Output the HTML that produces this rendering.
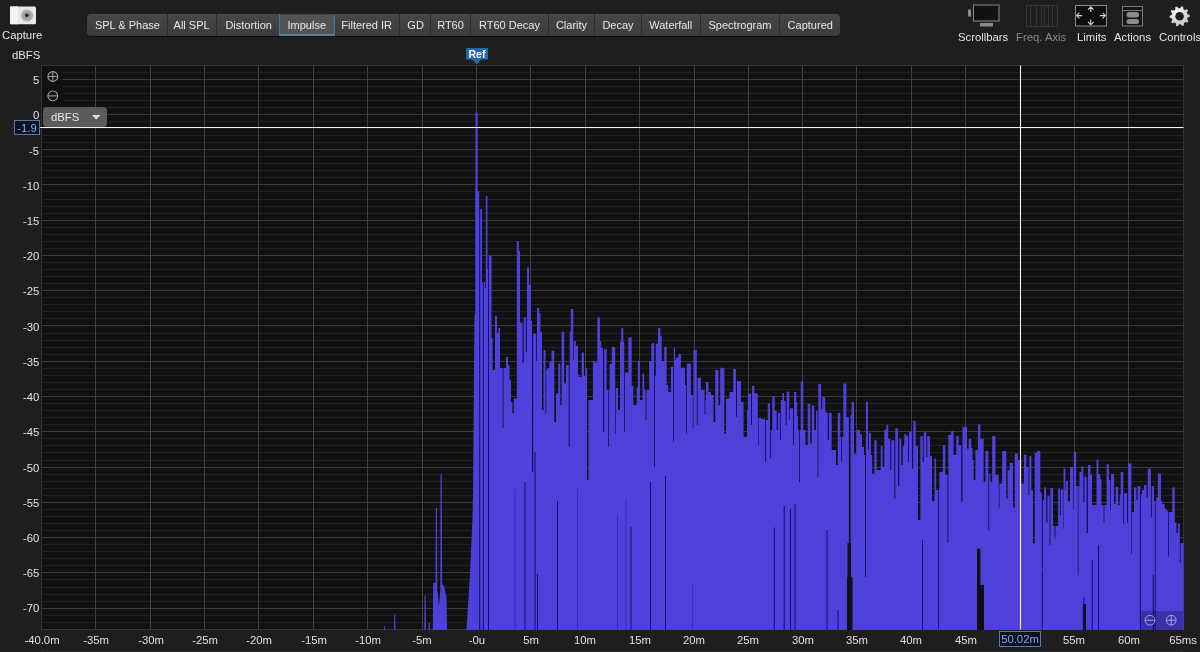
<!DOCTYPE html><html><head><meta charset="utf-8"><style>
*{margin:0;padding:0;box-sizing:border-box}
html,body{width:1200px;height:652px;overflow:hidden;background:#1e1e1e;font-family:"Liberation Sans", sans-serif;color:#e6e6e6}
.a{position:absolute;white-space:nowrap;will-change:transform}
.tabs{position:absolute;left:87px;top:14px;height:22px;width:753px;border-radius:4px;background:linear-gradient(#474747,#3b3b3b);box-shadow:0 1px 1px rgba(0,0,0,.5)}
.tab{position:absolute;top:0;height:22px;font-size:11px;line-height:22px;text-align:center;color:#e8e8e8;border-right:1px solid #2e2e2e;will-change:transform}
.lbl{font-size:11.3px;color:#e4e4e4}
.yl{position:absolute;right:1160.7px;font-size:11.3px;color:#e0e0e0;text-align:right;line-height:12px;will-change:transform}
.xl{position:absolute;top:634px;font-size:11.3px;color:#e0e0e0;line-height:12px;width:60px;text-align:center;will-change:transform}
</style></head><body>
<div class="tabs">
<div class="tab" style="left:0.5px;width:79.8px">SPL & Phase</div>
<div class="tab" style="left:80.3px;width:50.2px">All SPL</div>
<div class="tab" style="left:130.5px;width:62.3px">Distortion</div>
<div class="tab" style="left:192.3px;width:55.6px;background:#535353;border:1px solid #4d7590;border-top-color:#2c4a60;border-bottom:2px solid #5282a3;line-height:20px;top:0">Impulse</div>
<div class="tab" style="left:247.4px;width:66.4px">Filtered IR</div>
<div class="tab" style="left:313.8px;width:30.2px">GD</div>
<div class="tab" style="left:344.0px;width:40.0px">RT60</div>
<div class="tab" style="left:384.0px;width:78.0px">RT60 Decay</div>
<div class="tab" style="left:462.0px;width:46.0px">Clarity</div>
<div class="tab" style="left:508.0px;width:47.0px">Decay</div>
<div class="tab" style="left:555.0px;width:58.5px">Waterfall</div>
<div class="tab" style="left:613.5px;width:79.0px">Spectrogram</div>
<div class="tab" style="left:692.5px;width:60.5px;border-right:none">Captured</div>
</div>
<div class="a lbl" style="left:2px;top:29px">Capture</div>
<div class="a lbl" style="left:12px;top:49px">dBFS</div>
<div class="a lbl" style="left:957.6px;top:30.8px;color:#e4e4e4">Scrollbars</div>
<div class="a lbl" style="left:1016px;top:30.8px;color:#8a8a8a">Freq. Axis</div>
<div class="a lbl" style="left:1076.5px;top:30.8px;color:#e4e4e4">Limits</div>
<div class="a lbl" style="left:1113.5px;top:30.8px;color:#e4e4e4">Actions</div>
<div class="a lbl" style="left:1158.5px;top:30.8px;color:#e4e4e4">Controls</div>
<div class="yl" style="top:74.1px">5</div>
<div class="yl" style="top:109.3px">0</div>
<div class="yl" style="top:144.5px">-5</div>
<div class="yl" style="top:179.7px">-10</div>
<div class="yl" style="top:215.0px">-15</div>
<div class="yl" style="top:250.2px">-20</div>
<div class="yl" style="top:285.4px">-25</div>
<div class="yl" style="top:320.6px">-30</div>
<div class="yl" style="top:355.8px">-35</div>
<div class="yl" style="top:391.1px">-40</div>
<div class="yl" style="top:426.3px">-45</div>
<div class="yl" style="top:461.5px">-50</div>
<div class="yl" style="top:496.7px">-55</div>
<div class="yl" style="top:531.9px">-60</div>
<div class="yl" style="top:567.2px">-65</div>
<div class="yl" style="top:602.4px">-70</div>
<div class="xl" style="left:12.0px">-40.0m</div>
<div class="xl" style="left:66.3px">-35m</div>
<div class="xl" style="left:120.7px">-30m</div>
<div class="xl" style="left:175.0px">-25m</div>
<div class="xl" style="left:229.3px">-20m</div>
<div class="xl" style="left:283.7px">-15m</div>
<div class="xl" style="left:338.0px">-10m</div>
<div class="xl" style="left:392.3px">-5m</div>
<div class="xl" style="left:446.7px">-0u</div>
<div class="xl" style="left:501.0px">5m</div>
<div class="xl" style="left:555.3px">10m</div>
<div class="xl" style="left:609.7px">15m</div>
<div class="xl" style="left:664.0px">20m</div>
<div class="xl" style="left:718.3px">25m</div>
<div class="xl" style="left:772.7px">30m</div>
<div class="xl" style="left:827.0px">35m</div>
<div class="xl" style="left:881.3px">40m</div>
<div class="xl" style="left:935.7px">45m</div>
<div class="xl" style="left:1044.3px">55m</div>
<div class="xl" style="left:1098.7px">60m</div>
<div class="xl" style="left:1153.0px">65ms</div>
<svg class="a" style="left:0;top:0" width="1200" height="652" viewBox="0 0 1200 652">
<rect x="41.5" y="65.5" width="1142.0" height="564.0" fill="#111111" stroke="#353535" stroke-width="1"/>
<line x1="41.5" y1="72.5" x2="1183.5" y2="72.5" stroke="#222222"/>
<line x1="41.5" y1="79.5" x2="1183.5" y2="79.5" stroke="#3a3a3a"/>
<line x1="41.5" y1="86.5" x2="1183.5" y2="86.5" stroke="#222222"/>
<line x1="41.5" y1="93.5" x2="1183.5" y2="93.5" stroke="#222222"/>
<line x1="41.5" y1="100.5" x2="1183.5" y2="100.5" stroke="#222222"/>
<line x1="41.5" y1="107.5" x2="1183.5" y2="107.5" stroke="#222222"/>
<line x1="41.5" y1="114.5" x2="1183.5" y2="114.5" stroke="#3a3a3a"/>
<line x1="41.5" y1="121.5" x2="1183.5" y2="121.5" stroke="#222222"/>
<line x1="41.5" y1="128.5" x2="1183.5" y2="128.5" stroke="#222222"/>
<line x1="41.5" y1="135.5" x2="1183.5" y2="135.5" stroke="#222222"/>
<line x1="41.5" y1="142.5" x2="1183.5" y2="142.5" stroke="#222222"/>
<line x1="41.5" y1="149.5" x2="1183.5" y2="149.5" stroke="#3a3a3a"/>
<line x1="41.5" y1="156.5" x2="1183.5" y2="156.5" stroke="#222222"/>
<line x1="41.5" y1="163.5" x2="1183.5" y2="163.5" stroke="#222222"/>
<line x1="41.5" y1="170.5" x2="1183.5" y2="170.5" stroke="#222222"/>
<line x1="41.5" y1="177.5" x2="1183.5" y2="177.5" stroke="#222222"/>
<line x1="41.5" y1="184.5" x2="1183.5" y2="184.5" stroke="#3a3a3a"/>
<line x1="41.5" y1="191.5" x2="1183.5" y2="191.5" stroke="#222222"/>
<line x1="41.5" y1="199.5" x2="1183.5" y2="199.5" stroke="#222222"/>
<line x1="41.5" y1="206.5" x2="1183.5" y2="206.5" stroke="#222222"/>
<line x1="41.5" y1="213.5" x2="1183.5" y2="213.5" stroke="#222222"/>
<line x1="41.5" y1="220.5" x2="1183.5" y2="220.5" stroke="#3a3a3a"/>
<line x1="41.5" y1="227.5" x2="1183.5" y2="227.5" stroke="#222222"/>
<line x1="41.5" y1="234.5" x2="1183.5" y2="234.5" stroke="#222222"/>
<line x1="41.5" y1="241.5" x2="1183.5" y2="241.5" stroke="#222222"/>
<line x1="41.5" y1="248.5" x2="1183.5" y2="248.5" stroke="#222222"/>
<line x1="41.5" y1="255.5" x2="1183.5" y2="255.5" stroke="#3a3a3a"/>
<line x1="41.5" y1="262.5" x2="1183.5" y2="262.5" stroke="#222222"/>
<line x1="41.5" y1="269.5" x2="1183.5" y2="269.5" stroke="#222222"/>
<line x1="41.5" y1="276.5" x2="1183.5" y2="276.5" stroke="#222222"/>
<line x1="41.5" y1="283.5" x2="1183.5" y2="283.5" stroke="#222222"/>
<line x1="41.5" y1="290.5" x2="1183.5" y2="290.5" stroke="#3a3a3a"/>
<line x1="41.5" y1="297.5" x2="1183.5" y2="297.5" stroke="#222222"/>
<line x1="41.5" y1="304.5" x2="1183.5" y2="304.5" stroke="#222222"/>
<line x1="41.5" y1="311.5" x2="1183.5" y2="311.5" stroke="#222222"/>
<line x1="41.5" y1="318.5" x2="1183.5" y2="318.5" stroke="#222222"/>
<line x1="41.5" y1="325.5" x2="1183.5" y2="325.5" stroke="#3a3a3a"/>
<line x1="41.5" y1="333.5" x2="1183.5" y2="333.5" stroke="#222222"/>
<line x1="41.5" y1="340.5" x2="1183.5" y2="340.5" stroke="#222222"/>
<line x1="41.5" y1="347.5" x2="1183.5" y2="347.5" stroke="#222222"/>
<line x1="41.5" y1="354.5" x2="1183.5" y2="354.5" stroke="#222222"/>
<line x1="41.5" y1="361.5" x2="1183.5" y2="361.5" stroke="#3a3a3a"/>
<line x1="41.5" y1="368.5" x2="1183.5" y2="368.5" stroke="#222222"/>
<line x1="41.5" y1="375.5" x2="1183.5" y2="375.5" stroke="#222222"/>
<line x1="41.5" y1="382.5" x2="1183.5" y2="382.5" stroke="#222222"/>
<line x1="41.5" y1="389.5" x2="1183.5" y2="389.5" stroke="#222222"/>
<line x1="41.5" y1="396.5" x2="1183.5" y2="396.5" stroke="#3a3a3a"/>
<line x1="41.5" y1="403.5" x2="1183.5" y2="403.5" stroke="#222222"/>
<line x1="41.5" y1="410.5" x2="1183.5" y2="410.5" stroke="#222222"/>
<line x1="41.5" y1="417.5" x2="1183.5" y2="417.5" stroke="#222222"/>
<line x1="41.5" y1="424.5" x2="1183.5" y2="424.5" stroke="#222222"/>
<line x1="41.5" y1="431.5" x2="1183.5" y2="431.5" stroke="#3a3a3a"/>
<line x1="41.5" y1="438.5" x2="1183.5" y2="438.5" stroke="#222222"/>
<line x1="41.5" y1="445.5" x2="1183.5" y2="445.5" stroke="#222222"/>
<line x1="41.5" y1="452.5" x2="1183.5" y2="452.5" stroke="#222222"/>
<line x1="41.5" y1="460.5" x2="1183.5" y2="460.5" stroke="#222222"/>
<line x1="41.5" y1="467.5" x2="1183.5" y2="467.5" stroke="#3a3a3a"/>
<line x1="41.5" y1="474.5" x2="1183.5" y2="474.5" stroke="#222222"/>
<line x1="41.5" y1="481.5" x2="1183.5" y2="481.5" stroke="#222222"/>
<line x1="41.5" y1="488.5" x2="1183.5" y2="488.5" stroke="#222222"/>
<line x1="41.5" y1="495.5" x2="1183.5" y2="495.5" stroke="#222222"/>
<line x1="41.5" y1="502.5" x2="1183.5" y2="502.5" stroke="#3a3a3a"/>
<line x1="41.5" y1="509.5" x2="1183.5" y2="509.5" stroke="#222222"/>
<line x1="41.5" y1="516.5" x2="1183.5" y2="516.5" stroke="#222222"/>
<line x1="41.5" y1="523.5" x2="1183.5" y2="523.5" stroke="#222222"/>
<line x1="41.5" y1="530.5" x2="1183.5" y2="530.5" stroke="#222222"/>
<line x1="41.5" y1="537.5" x2="1183.5" y2="537.5" stroke="#3a3a3a"/>
<line x1="41.5" y1="544.5" x2="1183.5" y2="544.5" stroke="#222222"/>
<line x1="41.5" y1="551.5" x2="1183.5" y2="551.5" stroke="#222222"/>
<line x1="41.5" y1="558.5" x2="1183.5" y2="558.5" stroke="#222222"/>
<line x1="41.5" y1="565.5" x2="1183.5" y2="565.5" stroke="#222222"/>
<line x1="41.5" y1="572.5" x2="1183.5" y2="572.5" stroke="#3a3a3a"/>
<line x1="41.5" y1="579.5" x2="1183.5" y2="579.5" stroke="#222222"/>
<line x1="41.5" y1="587.5" x2="1183.5" y2="587.5" stroke="#222222"/>
<line x1="41.5" y1="594.5" x2="1183.5" y2="594.5" stroke="#222222"/>
<line x1="41.5" y1="601.5" x2="1183.5" y2="601.5" stroke="#222222"/>
<line x1="41.5" y1="608.5" x2="1183.5" y2="608.5" stroke="#3a3a3a"/>
<line x1="41.5" y1="615.5" x2="1183.5" y2="615.5" stroke="#222222"/>
<line x1="41.5" y1="622.5" x2="1183.5" y2="622.5" stroke="#222222"/>
<line x1="95.5" y1="65.5" x2="95.5" y2="629.5" stroke="#424242"/>
<line x1="150.5" y1="65.5" x2="150.5" y2="629.5" stroke="#424242"/>
<line x1="204.5" y1="65.5" x2="204.5" y2="629.5" stroke="#424242"/>
<line x1="258.5" y1="65.5" x2="258.5" y2="629.5" stroke="#424242"/>
<line x1="313.5" y1="65.5" x2="313.5" y2="629.5" stroke="#424242"/>
<line x1="367.5" y1="65.5" x2="367.5" y2="629.5" stroke="#424242"/>
<line x1="422.5" y1="65.5" x2="422.5" y2="629.5" stroke="#424242"/>
<line x1="476.5" y1="65.5" x2="476.5" y2="629.5" stroke="#424242"/>
<line x1="530.5" y1="65.5" x2="530.5" y2="629.5" stroke="#424242"/>
<line x1="585.5" y1="65.5" x2="585.5" y2="629.5" stroke="#424242"/>
<line x1="639.5" y1="65.5" x2="639.5" y2="629.5" stroke="#424242"/>
<line x1="694.5" y1="65.5" x2="694.5" y2="629.5" stroke="#424242"/>
<line x1="748.5" y1="65.5" x2="748.5" y2="629.5" stroke="#424242"/>
<line x1="802.5" y1="65.5" x2="802.5" y2="629.5" stroke="#424242"/>
<line x1="856.5" y1="65.5" x2="856.5" y2="629.5" stroke="#424242"/>
<line x1="911.5" y1="65.5" x2="911.5" y2="629.5" stroke="#424242"/>
<line x1="965.5" y1="65.5" x2="965.5" y2="629.5" stroke="#424242"/>
<line x1="1020.5" y1="65.5" x2="1020.5" y2="629.5" stroke="#424242"/>
<line x1="1074.5" y1="65.5" x2="1074.5" y2="629.5" stroke="#424242"/>
<line x1="1128.5" y1="65.5" x2="1128.5" y2="629.5" stroke="#424242"/>
<rect x="479.20" y="209.00" width="1.00" height="13.00" fill="#140c70"/>
<rect x="485.00" y="282.00" width="0.80" height="6.00" fill="#140c70"/>
<rect x="487.50" y="256.00" width="1.00" height="13.00" fill="#140c70"/>
<rect x="502.60" y="368.00" width="0.80" height="60.00" fill="#140c70"/>
<rect x="522.50" y="322.50" width="1.20" height="40.50" fill="#140c70"/>
<rect x="525.80" y="317.00" width="1.20" height="35.00" fill="#140c70"/>
<rect x="532.00" y="333.75" width="1.20" height="138.25" fill="#140c70"/>
<rect x="536.20" y="333.75" width="0.80" height="27.25" fill="#140c70"/>
<rect x="545.50" y="370.00" width="0.70" height="43.60" fill="#140c70"/>
<rect x="568.70" y="365.00" width="1.00" height="82.00" fill="#140c70"/>
<rect x="573.30" y="341.00" width="0.60" height="19.00" fill="#140c70"/>
<rect x="603.00" y="349.00" width="1.20" height="83.00" fill="#140c70"/>
<rect x="608.20" y="390.00" width="0.80" height="57.00" fill="#140c70"/>
<rect x="615.20" y="388.00" width="0.70" height="45.60" fill="#140c70"/>
<rect x="624.20" y="372.50" width="0.80" height="59.50" fill="#140c70"/>
<rect x="645.60" y="390.00" width="0.90" height="30.00" fill="#140c70"/>
<rect x="654.20" y="376.00" width="0.80" height="91.00" fill="#140c70"/>
<rect x="673.00" y="366.80" width="0.80" height="75.00" fill="#140c70"/>
<rect x="675.00" y="357.60" width="0.90" height="2.40" fill="#140c70"/>
<rect x="686.00" y="385.00" width="0.80" height="48.40" fill="#140c70"/>
<rect x="692.80" y="395.00" width="0.60" height="33.00" fill="#140c70"/>
<rect x="696.80" y="377.70" width="0.80" height="47.30" fill="#140c70"/>
<rect x="704.60" y="400.00" width="0.80" height="15.00" fill="#140c70"/>
<rect x="736.00" y="381.00" width="1.00" height="35.70" fill="#140c70"/>
<rect x="751.10" y="393.60" width="0.90" height="31.40" fill="#140c70"/>
<rect x="758.40" y="418.00" width="0.60" height="27.00" fill="#140c70"/>
<rect x="765.00" y="420.00" width="0.80" height="42.00" fill="#140c70"/>
<rect x="770.00" y="430.00" width="0.80" height="28.50" fill="#140c70"/>
<rect x="776.70" y="412.80" width="1.30" height="17.20" fill="#140c70"/>
<rect x="780.00" y="412.80" width="0.80" height="27.20" fill="#140c70"/>
<rect x="785.70" y="400.70" width="1.00" height="24.30" fill="#140c70"/>
<rect x="789.30" y="408.30" width="0.70" height="11.70" fill="#140c70"/>
<rect x="793.00" y="408.30" width="1.00" height="36.70" fill="#140c70"/>
<rect x="799.20" y="430.00" width="0.80" height="52.00" fill="#140c70"/>
<rect x="817.60" y="410.70" width="0.70" height="66.30" fill="#140c70"/>
<rect x="821.00" y="397.00" width="1.30" height="12.30" fill="#140c70"/>
<rect x="827.70" y="412.70" width="1.30" height="27.30" fill="#140c70"/>
<rect x="841.00" y="437.00" width="0.80" height="25.00" fill="#140c70"/>
<rect x="865.00" y="455.00" width="0.90" height="122.00" fill="#140c70"/>
<rect x="868.00" y="432.70" width="1.00" height="17.30" fill="#140c70"/>
<rect x="890.30" y="440.30" width="1.00" height="29.70" fill="#140c70"/>
<rect x="894.30" y="440.30" width="1.00" height="58.10" fill="#140c70"/>
<rect x="898.00" y="438.70" width="1.30" height="47.30" fill="#140c70"/>
<rect x="908.00" y="436.00" width="1.00" height="26.00" fill="#140c70"/>
<rect x="912.00" y="431.70" width="1.30" height="36.90" fill="#140c70"/>
<rect x="922.70" y="436.00" width="1.00" height="26.00" fill="#140c70"/>
<rect x="926.30" y="436.30" width="1.00" height="20.70" fill="#140c70"/>
<rect x="938.00" y="490.00" width="0.80" height="139.00" fill="#140c70"/>
<rect x="947.50" y="475.00" width="0.80" height="67.70" fill="#140c70"/>
<rect x="961.20" y="445.00" width="1.30" height="56.80" fill="#140c70"/>
<rect x="988.40" y="473.60" width="0.80" height="56.60" fill="#140c70"/>
<rect x="998.80" y="483.60" width="0.70" height="24.90" fill="#140c70"/>
<rect x="1028.50" y="467.00" width="0.80" height="28.00" fill="#140c70"/>
<rect x="1041.80" y="500.00" width="1.00" height="69.00" fill="#140c70"/>
<rect x="1046.20" y="495.70" width="1.20" height="27.00" fill="#140c70"/>
<rect x="1049.60" y="495.70" width="0.80" height="49.30" fill="#140c70"/>
<rect x="1054.60" y="526.00" width="0.80" height="13.00" fill="#140c70"/>
<rect x="1060.00" y="489.40" width="0.80" height="25.60" fill="#140c70"/>
<rect x="1063.20" y="489.40" width="0.40" height="39.60" fill="#140c70"/>
<rect x="1065.40" y="480.80" width="0.60" height="9.20" fill="#140c70"/>
<rect x="1073.20" y="467.00" width="0.60" height="43.00" fill="#140c70"/>
<rect x="1077.80" y="486.00" width="0.60" height="89.00" fill="#140c70"/>
<rect x="1083.30" y="476.40" width="1.10" height="26.10" fill="#140c70"/>
<rect x="1086.70" y="476.40" width="1.30" height="56.60" fill="#140c70"/>
<rect x="1103.60" y="505.00" width="0.80" height="17.70" fill="#140c70"/>
<rect x="1110.30" y="480.00" width="0.70" height="30.00" fill="#140c70"/>
<rect x="1123.20" y="493.20" width="0.80" height="30.80" fill="#140c70"/>
<rect x="1127.00" y="493.20" width="1.00" height="29.50" fill="#140c70"/>
<rect x="1131.40" y="512.00" width="0.60" height="42.00" fill="#140c70"/>
<rect x="1136.40" y="487.50" width="1.30" height="12.50" fill="#140c70"/>
<rect x="1146.50" y="485.00" width="1.20" height="12.60" fill="#140c70"/>
<rect x="1150.90" y="486.00" width="0.90" height="31.60" fill="#140c70"/>
<rect x="1154.80" y="501.00" width="0.80" height="129.00" fill="#140c70"/>
<rect x="1168.00" y="512.00" width="0.80" height="44.60" fill="#140c70"/>
<rect x="1179.80" y="543.00" width="0.80" height="20.00" fill="#140c70"/>
<path d="M383.50,630.00 L384.50,625.00 L385.50,630.00 L394.00,630.00 L394.20,614.30 L395.20,614.30 L395.50,630.00 L424.30,630.00 L424.50,595.50 L425.70,595.50 L426.00,630.00 L428.50,630.00 L428.60,623.00 L429.80,623.00 L430.00,630.00 L432.80,630.00 L433.20,583.00 L435.50,583.00 L435.80,508.00 L437.00,508.00 L437.30,590.00 L439.00,606.00 L440.30,590.00 L440.50,474.50 L441.80,474.50 L442.20,584.00 L444.00,586.00 L446.50,597.00 L447.00,630.00 L466.50,630.00 L469.00,590.00 L470.00,573.00 L472.50,519.00 L473.20,481.00 L474.00,365.00 L474.60,314.00 L475.20,314.00 L475.20,191.00 L475.40,191.00 L475.40,112.50 L477.70,112.50 L477.70,191.00 L479.20,191.00 L479.20,222.00 L480.20,222.00 L480.20,209.00 L482.00,209.00 L482.00,282.00 L485.00,282.00 L485.00,288.00 L485.80,288.00 L485.80,196.00 L487.50,196.00 L487.50,269.00 L488.50,269.00 L488.50,256.00 L491.50,256.00 L491.50,338.00 L492.60,338.00 L492.60,370.00 L495.00,370.00 L495.00,315.80 L497.00,315.80 L497.00,333.00 L498.30,333.00 L498.30,328.00 L500.00,328.00 L500.00,368.00 L502.60,368.00 L502.60,428.00 L503.40,428.00 L503.40,368.00 L506.00,368.00 L506.00,356.70 L508.00,356.70 L508.00,365.00 L509.50,365.00 L509.50,380.00 L511.00,380.00 L511.00,402.00 L512.40,402.00 L512.40,413.00 L513.80,413.00 L513.80,398.50 L516.80,398.50 L516.80,241.00 L518.80,241.00 L518.80,251.00 L520.00,251.00 L520.00,322.50 L522.50,322.50 L522.50,363.00 L523.70,363.00 L523.70,317.00 L525.80,317.00 L525.80,352.00 L527.00,352.00 L527.00,267.50 L529.00,267.50 L529.00,285.00 L530.80,285.00 L530.80,321.00 L532.00,321.00 L532.00,472.00 L533.20,472.00 L533.20,333.75 L536.20,333.75 L536.20,361.00 L537.00,361.00 L537.00,308.00 L539.20,308.00 L539.20,313.00 L540.40,313.00 L540.40,331.70 L542.00,331.70 L542.00,410.00 L543.50,410.00 L543.50,350.00 L545.50,350.00 L545.50,413.60 L546.20,413.60 L546.20,370.00 L547.30,370.00 L547.30,368.00 L549.30,368.00 L549.30,362.00 L551.50,362.00 L551.50,350.70 L554.30,350.70 L554.30,422.00 L556.00,422.00 L556.00,393.50 L558.20,393.50 L558.20,363.40 L560.30,363.40 L560.30,405.00 L561.60,405.00 L561.60,331.70 L564.20,331.70 L564.20,383.50 L566.00,383.50 L566.00,365.00 L568.70,365.00 L568.70,447.00 L569.70,447.00 L569.70,331.70 L570.80,331.70 L570.80,309.00 L573.30,309.00 L573.30,360.00 L573.90,360.00 L573.90,341.00 L575.80,341.00 L575.80,346.00 L578.00,346.00 L578.00,375.00 L579.20,375.00 L579.20,376.70 L581.70,376.70 L581.70,352.50 L584.00,352.50 L584.00,376.00 L585.40,376.00 L585.40,368.30 L587.10,368.30 L587.10,480.00 L588.50,480.00 L588.50,400.00 L592.90,400.00 L592.90,360.80 L595.00,360.80 L595.00,362.50 L597.30,362.50 L597.30,317.50 L600.00,317.50 L600.00,341.00 L601.30,341.00 L601.30,348.00 L603.00,348.00 L603.00,432.00 L604.20,432.00 L604.20,349.00 L606.70,349.00 L606.70,390.00 L608.20,390.00 L608.20,447.00 L609.00,447.00 L609.00,390.00 L609.60,390.00 L609.60,364.00 L611.70,364.00 L611.70,347.00 L615.20,347.00 L615.20,433.60 L615.90,433.60 L615.90,388.00 L618.00,388.00 L618.00,410.00 L620.00,410.00 L620.00,341.70 L621.20,341.70 L621.20,328.00 L623.30,328.00 L623.30,341.70 L624.20,341.70 L624.20,432.00 L625.00,432.00 L625.00,372.50 L628.30,372.50 L628.30,337.50 L631.70,337.50 L631.70,386.00 L633.30,386.00 L633.30,405.00 L636.70,405.00 L636.70,387.00 L637.90,387.00 L637.90,360.80 L640.00,360.80 L640.00,400.00 L642.50,400.00 L642.50,373.30 L644.20,373.30 L644.20,390.00 L645.60,390.00 L645.60,420.00 L646.50,420.00 L646.50,390.00 L649.20,390.00 L649.20,361.00 L651.30,361.00 L651.30,344.00 L652.00,344.00 L652.00,343.30 L654.20,343.30 L654.20,467.00 L655.00,467.00 L655.00,376.00 L655.80,376.00 L655.80,343.75 L658.00,343.75 L658.00,328.00 L660.40,328.00 L660.40,335.80 L661.70,335.80 L661.70,361.00 L664.20,361.00 L664.20,346.70 L665.00,346.70 L665.00,346.70 L666.70,346.70 L666.70,385.00 L668.30,385.00 L668.30,392.00 L670.90,392.00 L670.90,366.80 L673.00,366.80 L673.00,441.80 L673.80,441.80 L673.80,347.60 L675.00,347.60 L675.00,360.00 L675.90,360.00 L675.90,357.60 L678.40,357.60 L678.40,354.00 L680.90,354.00 L680.90,367.70 L685.00,367.70 L685.00,385.00 L686.00,385.00 L686.00,433.40 L686.80,433.40 L686.80,363.50 L690.90,363.50 L690.90,395.00 L692.80,395.00 L692.80,428.00 L693.40,428.00 L693.40,350.00 L696.80,350.00 L696.80,425.00 L697.60,425.00 L697.60,377.70 L701.00,377.70 L701.00,390.00 L704.60,390.00 L704.60,415.00 L705.40,415.00 L705.40,400.00 L706.00,400.00 L706.00,382.00 L708.50,382.00 L708.50,392.00 L711.00,392.00 L711.00,395.00 L713.50,395.00 L713.50,422.00 L715.20,422.00 L715.20,370.00 L718.50,370.00 L718.50,405.00 L720.20,405.00 L720.20,367.70 L724.40,367.70 L724.40,433.40 L726.00,433.40 L726.00,398.60 L729.40,398.60 L729.40,392.00 L733.20,392.00 L733.20,369.00 L736.00,369.00 L736.00,416.70 L737.00,416.70 L737.00,381.00 L741.00,381.00 L741.00,402.00 L743.60,402.00 L743.60,436.80 L747.00,436.80 L747.00,410.00 L747.80,410.00 L747.80,393.60 L751.10,393.60 L751.10,425.00 L752.00,425.00 L752.00,386.00 L754.50,386.00 L754.50,393.60 L757.80,393.60 L757.80,418.00 L758.40,418.00 L758.40,445.00 L759.00,445.00 L759.00,418.00 L761.20,418.00 L761.20,418.70 L765.00,418.70 L765.00,462.00 L765.80,462.00 L765.80,420.00 L767.80,420.00 L767.80,403.60 L770.00,403.60 L770.00,458.50 L770.80,458.50 L770.80,430.00 L772.30,430.00 L772.30,396.00 L774.70,396.00 L774.70,410.70 L776.70,410.70 L776.70,430.00 L778.00,430.00 L778.00,412.80 L780.00,412.80 L780.00,440.00 L780.80,440.00 L780.80,400.00 L782.30,400.00 L782.30,393.00 L784.00,393.00 L784.00,400.70 L785.70,400.70 L785.70,425.00 L786.70,425.00 L786.70,391.70 L789.30,391.70 L789.30,420.00 L790.00,420.00 L790.00,408.30 L793.00,408.30 L793.00,445.00 L794.00,445.00 L794.00,392.00 L796.30,392.00 L796.30,402.00 L797.20,402.00 L797.20,416.00 L798.00,416.00 L798.00,430.00 L799.20,430.00 L799.20,482.00 L800.00,482.00 L800.00,430.00 L800.70,430.00 L800.70,381.30 L803.30,381.30 L803.30,430.00 L805.50,430.00 L805.50,445.00 L807.70,445.00 L807.70,403.70 L810.30,403.70 L810.30,443.50 L811.70,443.50 L811.70,405.30 L814.30,405.30 L814.30,430.00 L816.00,430.00 L816.00,410.70 L817.60,410.70 L817.60,477.00 L818.30,477.00 L818.30,384.00 L821.00,384.00 L821.00,409.30 L822.30,409.30 L822.30,397.00 L825.30,397.00 L825.30,412.30 L827.70,412.30 L827.70,440.00 L829.00,440.00 L829.00,412.70 L831.70,412.70 L831.70,450.00 L836.00,450.00 L836.00,465.00 L837.70,465.00 L837.70,412.70 L840.30,412.70 L840.30,437.00 L841.00,437.00 L841.00,462.00 L841.80,462.00 L841.80,437.00 L843.30,437.00 L843.30,383.50 L846.40,383.50 L846.40,417.00 L848.90,417.00 L848.90,467.00 L850.60,467.00 L850.60,415.00 L851.50,415.00 L851.50,402.00 L854.00,402.00 L854.00,453.50 L856.50,453.50 L856.50,430.00 L860.00,430.00 L860.00,434.30 L862.00,434.30 L862.00,447.00 L864.00,447.00 L864.00,455.00 L865.00,455.00 L865.00,577.00 L865.90,577.00 L865.90,401.70 L868.00,401.70 L868.00,450.00 L869.00,450.00 L869.00,432.70 L871.00,432.70 L871.00,455.00 L872.20,455.00 L872.20,474.00 L874.30,474.00 L874.30,440.30 L876.70,440.30 L876.70,470.00 L880.70,470.00 L880.70,446.00 L882.70,446.00 L882.70,467.00 L884.30,467.00 L884.30,429.70 L886.30,429.70 L886.30,425.00 L888.30,425.00 L888.30,439.00 L890.30,439.00 L890.30,470.00 L891.30,470.00 L891.30,440.30 L894.30,440.30 L894.30,498.40 L895.30,498.40 L895.30,428.30 L898.00,428.30 L898.00,486.00 L899.30,486.00 L899.30,438.70 L901.30,438.70 L901.30,465.00 L902.70,465.00 L902.70,446.30 L904.30,446.30 L904.30,434.00 L906.30,434.00 L906.30,436.00 L908.00,436.00 L908.00,462.00 L909.00,462.00 L909.00,431.70 L912.00,431.70 L912.00,468.60 L913.30,468.60 L913.30,420.70 L915.70,420.70 L915.70,445.70 L918.00,445.70 L918.00,520.00 L920.30,520.00 L920.30,436.00 L922.70,436.00 L922.70,462.00 L923.70,462.00 L923.70,432.30 L926.30,432.30 L926.30,457.00 L927.30,457.00 L927.30,436.30 L930.00,436.30 L930.00,456.00 L932.00,456.00 L932.00,501.00 L934.40,501.00 L934.40,458.60 L936.10,458.60 L936.10,490.00 L938.00,490.00 L938.00,629.00 L938.80,629.00 L938.80,490.00 L939.40,490.00 L939.40,472.00 L942.80,472.00 L942.80,445.00 L945.30,445.00 L945.30,475.00 L947.50,475.00 L947.50,542.70 L948.30,542.70 L948.30,435.00 L951.10,435.00 L951.10,431.00 L953.60,431.00 L953.60,455.00 L956.20,455.00 L956.20,436.00 L958.70,436.00 L958.70,445.00 L961.20,445.00 L961.20,501.80 L962.50,501.80 L962.50,426.80 L967.00,426.80 L967.00,448.50 L968.70,448.50 L968.70,439.00 L971.20,439.00 L971.20,448.00 L972.50,448.00 L972.50,460.00 L973.70,460.00 L973.70,480.00 L975.40,480.00 L975.40,450.00 L977.90,450.00 L977.90,424.30 L980.40,424.30 L980.40,438.50 L983.70,438.50 L983.70,482.00 L985.40,482.00 L985.40,451.00 L988.40,451.00 L988.40,530.20 L989.20,530.20 L989.20,473.60 L990.50,473.60 L990.50,482.00 L992.10,482.00 L992.10,436.00 L995.50,436.00 L995.50,475.00 L998.80,475.00 L998.80,508.50 L999.50,508.50 L999.50,483.60 L1002.10,483.60 L1002.10,451.00 L1006.30,451.00 L1006.30,498.40 L1007.60,498.40 L1007.60,470.00 L1009.70,470.00 L1009.70,462.70 L1013.00,462.70 L1013.00,507.60 L1014.70,507.60 L1014.70,453.50 L1018.00,453.50 L1018.00,460.00 L1021.40,460.00 L1021.40,483.60 L1023.90,483.60 L1023.90,454.40 L1026.40,454.40 L1026.40,467.00 L1028.50,467.00 L1028.50,495.00 L1029.30,495.00 L1029.30,456.00 L1031.40,456.00 L1031.40,490.00 L1033.00,490.00 L1033.00,543.60 L1034.70,543.60 L1034.70,452.70 L1037.30,452.70 L1037.30,451.00 L1040.30,451.00 L1040.30,492.60 L1041.80,492.60 L1041.80,569.00 L1042.80,569.00 L1042.80,500.00 L1044.00,500.00 L1044.00,487.50 L1046.20,487.50 L1046.20,522.70 L1047.40,522.70 L1047.40,495.70 L1049.60,495.70 L1049.60,545.00 L1050.40,545.00 L1050.40,488.00 L1053.00,488.00 L1053.00,526.00 L1054.60,526.00 L1054.60,539.00 L1055.40,539.00 L1055.40,526.00 L1058.10,526.00 L1058.10,488.80 L1060.00,488.80 L1060.00,515.00 L1060.80,515.00 L1060.80,489.40 L1063.20,489.40 L1063.20,529.00 L1063.60,529.00 L1063.60,468.60 L1065.40,468.60 L1065.40,490.00 L1066.00,490.00 L1066.00,480.80 L1067.90,480.80 L1067.90,501.00 L1070.00,501.00 L1070.00,467.00 L1073.20,467.00 L1073.20,510.00 L1073.80,510.00 L1073.80,452.00 L1076.20,452.00 L1076.20,486.00 L1077.80,486.00 L1077.80,575.00 L1078.40,575.00 L1078.40,486.00 L1079.50,486.00 L1079.50,472.00 L1081.40,472.00 L1081.40,466.40 L1083.30,466.40 L1083.30,502.50 L1084.40,502.50 L1084.40,476.40 L1086.70,476.40 L1086.70,533.00 L1088.00,533.00 L1088.00,465.00 L1090.50,465.00 L1090.50,474.60 L1092.00,474.60 L1092.00,505.00 L1096.50,505.00 L1096.50,459.50 L1098.40,459.50 L1098.40,474.00 L1100.30,474.00 L1100.30,479.00 L1101.50,479.00 L1101.50,505.00 L1103.60,505.00 L1103.60,522.70 L1104.40,522.70 L1104.40,505.00 L1106.60,505.00 L1106.60,464.20 L1109.00,464.20 L1109.00,480.00 L1110.30,480.00 L1110.30,510.00 L1111.00,510.00 L1111.00,474.00 L1114.10,474.00 L1114.10,504.00 L1115.70,504.00 L1115.70,487.00 L1118.20,487.00 L1118.20,505.00 L1119.70,505.00 L1119.70,494.50 L1120.70,494.50 L1120.70,472.00 L1123.20,472.00 L1123.20,524.00 L1124.00,524.00 L1124.00,493.20 L1127.00,493.20 L1127.00,522.70 L1128.00,522.70 L1128.00,463.50 L1131.40,463.50 L1131.40,554.00 L1132.00,554.00 L1132.00,512.00 L1134.00,512.00 L1134.00,487.50 L1136.40,487.50 L1136.40,500.00 L1137.70,500.00 L1137.70,486.00 L1140.20,486.00 L1140.20,494.50 L1142.00,494.50 L1142.00,490.00 L1144.00,490.00 L1144.00,485.00 L1146.50,485.00 L1146.50,497.60 L1147.70,497.60 L1147.70,468.60 L1150.90,468.60 L1150.90,517.60 L1151.80,517.60 L1151.80,486.00 L1154.00,486.00 L1154.00,501.00 L1154.80,501.00 L1154.80,630.00 L1155.60,630.00 L1155.60,501.00 L1156.20,501.00 L1156.20,497.60 L1157.80,497.60 L1157.80,473.60 L1161.00,473.60 L1161.00,500.80 L1162.20,500.80 L1162.20,504.00 L1164.70,504.00 L1164.70,509.00 L1167.00,509.00 L1167.00,511.00 L1168.00,511.00 L1168.00,556.60 L1168.80,556.60 L1168.80,512.00 L1172.30,512.00 L1172.30,487.50 L1174.80,487.50 L1174.80,522.70 L1176.40,522.70 L1176.40,532.70 L1177.80,532.70 L1177.80,524.00 L1179.80,524.00 L1179.80,563.00 L1180.60,563.00 L1180.60,543.00 L1183.70,543.00 L1183.70,630.00 Z" fill="#4e40d8"/>
<rect x="479.20" y="222.00" width="1" height="408.00" fill="#140c70"/>
<rect x="482.80" y="282.00" width="1" height="348.00" fill="#140c70"/>
<rect x="488.00" y="256.00" width="1" height="374.00" fill="#140c70"/>
<rect x="514.50" y="489.00" width="1" height="141.00" fill="#3a2eb4"/>
<rect x="577.00" y="489.00" width="1" height="141.00" fill="#3a2eb4"/>
<rect x="617.00" y="514.00" width="1" height="116.00" fill="#3a2eb4"/>
<rect x="625.50" y="499.00" width="1" height="131.00" fill="#3a2eb4"/>
<rect x="692.00" y="584.00" width="1" height="46.00" fill="#3a2eb4"/>
<rect x="524.50" y="482.00" width="1" height="148.00" fill="#140c70"/>
<rect x="534.50" y="452.00" width="1" height="178.00" fill="#140c70"/>
<rect x="537.00" y="574.00" width="1" height="56.00" fill="#140c70"/>
<rect x="557.00" y="501.00" width="1" height="129.00" fill="#140c70"/>
<rect x="630.50" y="527.00" width="1" height="103.00" fill="#140c70"/>
<rect x="650.00" y="482.00" width="1" height="148.00" fill="#140c70"/>
<rect x="665.00" y="476.00" width="1" height="154.00" fill="#140c70"/>
<rect x="773.75" y="527.50" width="1" height="102.50" fill="#140c70"/>
<rect x="783.75" y="506.00" width="1" height="124.00" fill="#140c70"/>
<rect x="790.00" y="509.00" width="1" height="121.00" fill="#140c70"/>
<rect x="794.50" y="504.00" width="1" height="126.00" fill="#140c70"/>
<rect x="826.50" y="530.00" width="1" height="100.00" fill="#140c70"/>
<rect x="837.50" y="610.00" width="1" height="20.00" fill="#140c70"/>
<rect x="922.00" y="540.00" width="1" height="90.00" fill="#140c70"/>
<rect x="848.90" y="467.00" width="1.70" height="163.00" fill="#111111"/>
<rect x="847.50" y="543.00" width="3.50" height="87.00" fill="#111111"/>
<rect x="847.00" y="577.00" width="5.50" height="53.00" fill="#111111"/>
<rect x="977.00" y="548.60" width="3.40" height="81.40" fill="#111111"/>
<rect x="979.50" y="585.00" width="4.50" height="45.00" fill="#111111"/>
<rect x="1082.80" y="604.00" width="3.20" height="26.00" fill="#111111"/>
<rect x="1083.30" y="597.50" width="1" height="32.50" fill="#140c70"/>
<rect x="1091.70" y="560.00" width="1" height="70.00" fill="#140c70"/>
<rect x="1098.00" y="545.00" width="1" height="85.00" fill="#140c70"/>
<rect x="1139.90" y="494.50" width="1" height="135.50" fill="#140c70"/>
<rect x="1152.80" y="575.00" width="1" height="55.00" fill="#140c70"/>
<rect x="1041.80" y="570.00" width="1" height="60.00" fill="#140c70"/>
<line x1="40" y1="127.5" x2="1183.5" y2="127.5" stroke="#f4f4f4" stroke-width="1.1"/>
<line x1="1020.5" y1="65.5" x2="1020.5" y2="629.5" stroke="#f4f4f4" stroke-width="1.1"/>
<rect x="42" y="66" width="20.5" height="38" fill="#111111"/>
<g stroke="#9c9c9c" fill="none" stroke-width="1.1"><circle cx="52.8" cy="76.5" r="4.9"/><line x1="47.9" y1="76.5" x2="57.7" y2="76.5"/><line x1="52.8" y1="71.6" x2="52.8" y2="81.4"/><circle cx="52.8" cy="95.9" r="4.9"/><line x1="47.9" y1="95.9" x2="57.7" y2="95.9"/></g>
</svg>
<svg class="a" style="left:0;top:0" width="1200" height="70"><path d="M466,48 H488 V59.6 H481 L476.6,64.3 L472.2,59.6 H466 Z" fill="#2467ad"/></svg>
<div class="a" style="left:466px;top:48px;width:22px;text-align:center;font-size:10.5px;font-weight:bold;color:#fff;line-height:12px">Ref</div>
<div class="a" style="left:43px;top:107px;width:63.5px;height:20px;border-radius:4px;background:#5b5b5b"></div>
<div class="a" style="left:50.5px;top:108px;font-size:11.3px;line-height:18px;color:#e8e8e8">dBFS</div>
<svg class="a" style="left:0;top:0" width="120" height="140"><path d="M92,115 H100.5 L96.25,119.5 Z" fill="#e0e0e0"/></svg>
<div class="a" style="left:14px;top:120px;width:26px;height:15px;border:1px solid #5878b0;background:#0b1022"></div>
<div class="a" style="left:14px;top:121.5px;width:26px;text-align:center;font-size:11.3px;line-height:12px;color:#8fb0e6">-1.9</div>
<div class="a" style="left:999px;top:631px;width:42px;height:16px;border:1px solid #5878b0;background:#0b1022"></div>
<div class="a" style="left:999px;top:633px;width:42px;text-align:center;font-size:11.3px;line-height:12px;color:#86a6e6">50.02m</div>
<div class="a" style="left:1140.8px;top:610.8px;width:41.5px;height:19px;background:rgba(8,4,40,0.26)"></div>
<svg class="a" style="left:0;top:0" width="1200" height="652"><g stroke="#aaa2e0" fill="none" stroke-width="1"><circle cx="1150" cy="620.2" r="4.9"/><line x1="1145.1" y1="620.2" x2="1154.9" y2="620.2"/><circle cx="1171.2" cy="620.2" r="4.9"/><line x1="1166.3" y1="620.2" x2="1176.1" y2="620.2"/><line x1="1171.2" y1="615.3" x2="1171.2" y2="625.1"/></g></svg>
<svg class="a" style="left:0;top:0" width="1200" height="30">
<g>
<!-- camera -->
<rect x="10" y="6.5" width="26" height="17.7" rx="1.5" fill="#e8e8e8"/>
<rect x="10" y="6.5" width="8" height="17.7" fill="#f4f4f4"/>
<circle cx="27" cy="15.5" r="6.2" fill="#b8b8b8"/>
<circle cx="27" cy="15.5" r="4.5" fill="#a0a0a0"/>
<circle cx="26.8" cy="15.3" r="1.8" fill="#222"/>
<!-- scrollbars -->
<rect x="973.5" y="5" width="25.5" height="16" fill="#121212" stroke="#8a8a8a" stroke-width="1"/>
<rect x="968" y="9.5" width="3" height="7" fill="#8a8a8a"/>
<rect x="980" y="23" width="13" height="3.5" fill="#8a8a8a"/>
<!-- freq axis -->
<rect x="1026.5" y="5.5" width="31" height="21" fill="none" stroke="#363636"/>
<g stroke="#333333"><line x1="1030.5" y1="5.5" x2="1030.5" y2="26.5"/><line x1="1036.5" y1="5.5" x2="1036.5" y2="26.5"/><line x1="1041.5" y1="5.5" x2="1041.5" y2="26.5"/><line x1="1044.5" y1="5.5" x2="1044.5" y2="26.5"/><line x1="1048.5" y1="5.5" x2="1048.5" y2="26.5"/><line x1="1052.5" y1="5.5" x2="1052.5" y2="26.5"/></g>
<!-- limits -->
<rect x="1075.5" y="5.5" width="31" height="20.5" fill="#0e0e0e" stroke="#8a8a8a"/>
<g stroke="#d0d0d0" fill="none" stroke-width="1.1">
<path d="M1090.8,6.8 V12 M1088,9.6 L1090.8,6.8 L1093.6,9.6"/>
<path d="M1090.8,19.5 V24.8 M1088,22 L1090.8,24.8 L1093.6,22"/>
<path d="M1076.6,15.6 H1082.2 M1079.4,12.8 L1076.6,15.6 L1079.4,18.4"/>
<path d="M1099.8,15.6 H1105.4 M1102.6,12.8 L1105.4,15.6 L1102.6,18.4"/>
</g>
<!-- actions -->
<rect x="1122.5" y="6.5" width="20" height="19.5" fill="#151515" stroke="#7a7a7a"/>
<line x1="1122.5" y1="10.5" x2="1142.5" y2="10.5" stroke="#7a7a7a"/>
<rect x="1126.5" y="12" width="12.5" height="5.5" rx="2.7" fill="#8c8c8c"/>
<rect x="1126.5" y="19" width="12.5" height="5" rx="2.5" fill="#8c8c8c"/>
</g>
</svg>
<svg class="a" style="left:1160px;top:0" width="40" height="32" viewBox="1160 0 40 32"><defs><radialGradient id="gg" cx="0.4" cy="0.35" r="0.7"><stop offset="0" stop-color="#ffffff"/><stop offset="1" stop-color="#b8b8c8"/></radialGradient></defs><polygon points="1189.73,15.08 1189.79,16.68 1187.45,17.84 1187.11,19.05 1188.51,21.26 1187.62,22.60 1185.04,22.16 1184.06,22.94 1183.89,25.55 1182.39,26.11 1180.56,24.24 1179.30,24.29 1177.63,26.31 1176.09,25.88 1175.71,23.29 1174.66,22.59 1172.13,23.24 1171.13,21.99 1172.34,19.67 1171.91,18.49 1169.47,17.52 1169.41,15.92 1171.75,14.76 1172.09,13.55 1170.69,11.34 1171.58,10.00 1174.16,10.44 1175.14,9.66 1175.31,7.05 1176.81,6.49 1178.64,8.36 1179.90,8.31 1181.57,6.29 1183.11,6.72 1183.49,9.31 1184.54,10.01 1187.07,9.36 1188.07,10.61 1186.86,12.93 1187.29,14.11" fill="url(#gg)"/><circle cx="1179.6" cy="16.3" r="4.3" fill="#1e1e1e"/></svg>
<div class="a" style="left:41px;top:651px;width:1142px;height:1px;background:#2c2c2c"></div>
</body></html>
